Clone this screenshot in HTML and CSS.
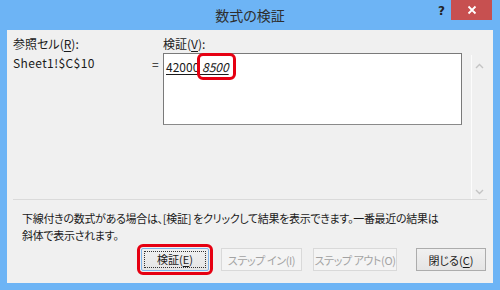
FILE: index.html
```html
<!DOCTYPE html>
<html lang="ja">
<head>
    <meta charset="UTF-8">
    <title>数式の検証</title>
    <link rel="stylesheet" href="styles.css">
</head>
<body>
    <div class="window">
        <div class="titlebar">
            <div class="title">数式の検証</div>
            <div class="help">?</div>
            <div class="close">
                <svg width="10" height="10" viewBox="0 0 10 10">
                    <path d="M1.5 1.5 L8.5 8.5 M8.5 1.5 L1.5 8.5" stroke="#fff" stroke-width="1.8"/>
                </svg>
            </div>
        </div>

        <div class="client">
            <div class="top">
                <div class="fields">
                    <div class="label">参照セル(<u>R</u>):</div>
                    <div></div>
                    <div class="label">検証(<u>V</u>):</div>

                    <div class="ref">Sheet1!$C$10</div>
                    <div class="eq">=</div>
                    <div class="formula">
                        <span class="ul">42000 </span><span class="ul result">8500</span>
                    </div>
                </div>
                <div class="scroll">
                    <svg width="9" height="6" viewBox="0 0 9 6"><path d="M1 5 L4.5 1.5 L8 5" fill="none" stroke="#c4c4c4" stroke-width="1.4"/></svg>
                    <svg width="9" height="6" viewBox="0 0 9 6"><path d="M1 1 L4.5 4.5 L8 1" fill="none" stroke="#c4c4c4" stroke-width="1.4"/></svg>
                </div>
            </div>

            <div class="separator"></div>

            <p class="hint">下線付きの数式がある場合は、[検証] をクリックして結果を表示できます。一番最近の結果は<br>斜体で表示されます。</p>

            <div class="buttons">
                <button class="btn btn-eval"><span class="focus">検証(<u>E</u>)</span></button>
                <button class="btn btn-in" disabled>ステップ イン(I)</button>
                <button class="btn btn-out" disabled>ステップ アウト(O)</button>
                <button class="btn btn-close">閉じる(<u>C</u>)</button>
            </div>
        </div>
    </div>
</body>
</html>
```

FILE: styles.css
```css
body {
    margin: 0;
    font-family: "Noto Sans CJK JP", "Noto Sans", sans-serif;
    font-size: 12px;
    color: #1a1a1a;
}
.window {
    width: 500px;
    height: 290px;
    background-color: #6db4f5;
    display: flex;
    flex-direction: column;
}
.titlebar {
    height: 30px;
    display: flex;
    align-items: flex-start;
    position: relative;
}
.title {
    position: absolute;
    left: 0;
    right: 0;
    top: 5px;
    text-align: center;
    font-size: 14px;
    line-height: 20px;
    color: #2e2e2e;
    font-feature-settings: "palt";
}
.help {
    margin-left: auto;
    margin-top: 2px;
    width: 13px;
    font-weight: bold;
    font-size: 12px;
    line-height: 18px;
    color: #222;
    font-family: "DejaVu Sans", sans-serif;
}
.close {
    width: 41px;
    height: 20px;
    margin-right: 8px;
    background-color: #c75050;
    display: flex;
    justify-content: center;
    align-items: center;
}
.client {
    flex: 1;
    margin: 0 7px 7px;
    background-color: #f0f0f0;
    display: flex;
    flex-direction: column;
}
.top {
    display: flex;
    padding: 5px 0 0 6px;
    height: 169px;
    box-sizing: border-box;
}
.fields {
    display: grid;
    grid-template-columns: 137px 13px 299px;
    grid-template-rows: 18px 72px;
    align-content: start;
}
.label {
    line-height: 17px;
    font-feature-settings: "palt";
}
.label u, .btn u {
    text-decoration-thickness: 1px;
    text-underline-offset: 2px;
}
.ref {
    padding-top: 1px;
    line-height: 17px;
    letter-spacing: 0.4px;
}
.eq {
    padding-top: 2px;
    padding-left: 2px;
    line-height: 17px;
}
.formula {
    background-color: #fff;
    border: 1px solid #7a7a7a;
    border-bottom-color: #8a8a8a;
    padding: 4px 0 0 2px;
    line-height: 17px;
}
.ul {
    text-decoration: underline;
    text-underline-offset: 2px;
    white-space: pre;
}
.result {
    font-style: italic;
    padding-right: 2px;
    outline: 3px solid #e60012;
    outline-offset: 2px;
    border-radius: 1px;
}
.scroll {
    margin: 20px 0 0 9px;
    width: 16px;
    height: 144px;
    border-left: 1px solid #fcfcfc;
    display: flex;
    flex-direction: column;
    justify-content: space-between;
    align-items: center;
    padding: 8px 0 4px;
    box-sizing: border-box;
}
.separator {
    margin: 0 6px;
    border-top: 1px solid #dadada;
}
.hint {
    margin: 10px 0 0 15px;
    font-size: 11px;
    letter-spacing: -0.3px;
    line-height: 17px;
    font-feature-settings: "palt";
}
.buttons {
    display: flex;
    justify-content: flex-end;
    padding: 4px 7px 0 0;
}
.btn {
    height: 23px;
    font-family: inherit;
    font-size: 11px;
    font-feature-settings: "palt";
    white-space: nowrap;
    padding: 0;
    border: 1px solid #acacac;
    background: linear-gradient(#f0f0f0, #e5e5e5);
    color: #1a1a1a;
    box-sizing: border-box;
}
.btn:disabled {
    border-color: #d9d9d9;
    background: #f4f4f4;
    color: #a3a3a3;
    letter-spacing: -0.4px;
}
.btn-eval {
    width: 68px;
    border-color: #7eb4ea;
    padding: 2px;
    outline: 3px solid #e60012;
    outline-offset: 1px;
    border-radius: 2px;
}
.focus {
    display: block;
    height: 100%;
    box-sizing: border-box;
    border: 1px dotted #333;
    line-height: 15px;
}
.btn-in {
    width: 81px;
    margin-left: 12px;
}
.btn-out {
    width: 84px;
    margin-left: 11px;
}
.btn-close {
    width: 70px;
    margin-left: 19px;
}
```
